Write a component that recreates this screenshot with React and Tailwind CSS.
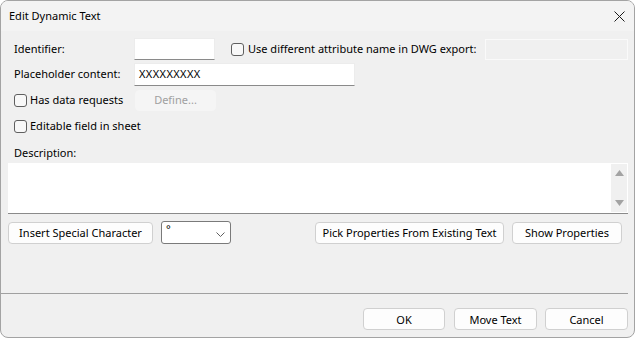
const font = { fontFamily: '"Noto Sans", "Open Sans", sans-serif' };

const Checkbox = () => (
  <span className="block w-[13px] h-[13px] shrink-0 rounded-[3px] border border-[#5f5f5f] bg-[#f8f8f8]" />
);

const Button = ({ children, className = '' }) => (
  <button
    className={`h-[22px] shrink-0 rounded-[4px] border border-[#d0d0d0] bg-[#fdfdfd] text-[11px] text-black leading-none whitespace-nowrap ${className}`}
  >
    {children}
  </button>
);

const App = () => {
  return (
    <div className="w-[636px] h-[339px] bg-white" style={font}>
      <div className="w-[635px] h-[338px] flex flex-col rounded-[8px] border border-[#a3a3a3] bg-[#f0f0f0] overflow-hidden text-[11px] text-black whitespace-nowrap">
        {/* title bar */}
        <div className="h-[30px] shrink-0 flex items-center justify-between bg-[#f3f3f3] pl-[8px] pr-[9px]">
          <span>Edit Dynamic Text</span>
          <svg width="11" height="11" viewBox="0 0 11 11" className="mt-[1px]">
            <path d="M0.5 0.5 L10.5 10.5 M10.5 0.5 L0.5 10.5" stroke="#1a1a1a" strokeWidth="1" fill="none" />
          </svg>
        </div>

        <div className="flex-1 flex flex-col pl-[7px] pr-[6px]">
          {/* identifier */}
          <div className="mt-[7px] h-[22px] flex items-center">
            <span className="ml-[6px] w-[120px]">Identifier:</span>
            <div className="w-[81px] h-[22px] bg-white border border-[#ececec] border-b-[#8a8a8a]" />
            <span className="ml-[16px]">
              <Checkbox />
            </span>
            <span className="ml-[4px] flex-1">Use different attribute name in DWG export:</span>
            <div className="w-[143px] h-[21px] border border-[#fafafa] bg-[#f0f0f0]" />
          </div>

          {/* placeholder */}
          <div className="mt-[3px] h-[23px] flex items-center">
            <span className="ml-[6px] w-[120px]">Placeholder content:</span>
            <div className="w-[221px] h-[23px] flex items-center pl-[4px] bg-white border border-[#ececec] border-b-[#8a8a8a] tracking-[0.4px]">
              XXXXXXXXX
            </div>
          </div>

          {/* data requests */}
          <div className="mt-[4px] h-[21px] flex items-center">
            <div className="ml-[6px] w-[121px] flex items-center gap-[3px]">
              <Checkbox />
              <span>Has data requests</span>
            </div>
            <div className="w-[81px] h-[21px] flex items-center justify-center rounded-[4px] border border-[#f5f5f5] bg-[#f5f5f5] text-[#a0a0a0]">
              Define...
            </div>
          </div>

          {/* editable */}
          <div className="mt-[6px] h-[18px] flex items-center gap-[3px] ml-[6px]">
            <Checkbox />
            <span>Editable field in sheet</span>
          </div>

          <div className="mt-[10px] h-[16px] flex items-center ml-[6px]">Description:</div>

          {/* description box */}
          <div className="mt-[2px] h-[51px] flex justify-end bg-white border-b border-[#8a8a8a]">
            <div className="w-[16px] mr-[1px] my-[1px] flex flex-col items-center justify-between py-[6px] bg-[#f0f0f0]">
              <svg width="9" height="6" viewBox="0 0 9 6">
                <path d="M4.5 0 L9 6 L0 6 Z" fill="#a3a3a3" />
              </svg>
              <svg width="9" height="6" viewBox="0 0 9 6">
                <path d="M0 0 L9 0 L4.5 6 Z" fill="#a3a3a3" />
              </svg>
            </div>
          </div>

          {/* tools row */}
          <div className="mt-[7px] h-[23px] flex items-center">
            <Button className="w-[145px]">Insert Special Character</Button>
            <div className="ml-[8px] w-[70px] h-[23px] relative rounded-[3px] border border-[#7a7a7a] bg-white">
              <span className="absolute left-[4px] top-[-1px]">°</span>
              <svg width="9" height="5" viewBox="0 0 9 5" className="absolute right-[5px] top-[10px]">
                <path d="M0.5 0.5 L4.5 4.5 L8.5 0.5" stroke="#606060" strokeWidth="1" fill="none" />
              </svg>
            </div>
            <div className="flex-1" />
            <Button className="w-[189px]">Pick Properties From Existing Text</Button>
            <Button className="ml-[8px] mr-[6px] w-[110px]">Show Properties</Button>
          </div>

          <div className="flex-1" />
          <div className="ml-[-7px] h-px bg-[#a0a0a0]" />

          {/* footer */}
          <div className="h-[43px] flex items-start justify-end pt-[14px]">
            <Button className="w-[82px] border-[#0067c0]">OK</Button>
            <Button className="ml-[9px] w-[83px]">Move Text</Button>
            <Button className="ml-[8px] w-[83px]">Cancel</Button>
          </div>
        </div>
      </div>
    </div>
  );
};

export default App;
